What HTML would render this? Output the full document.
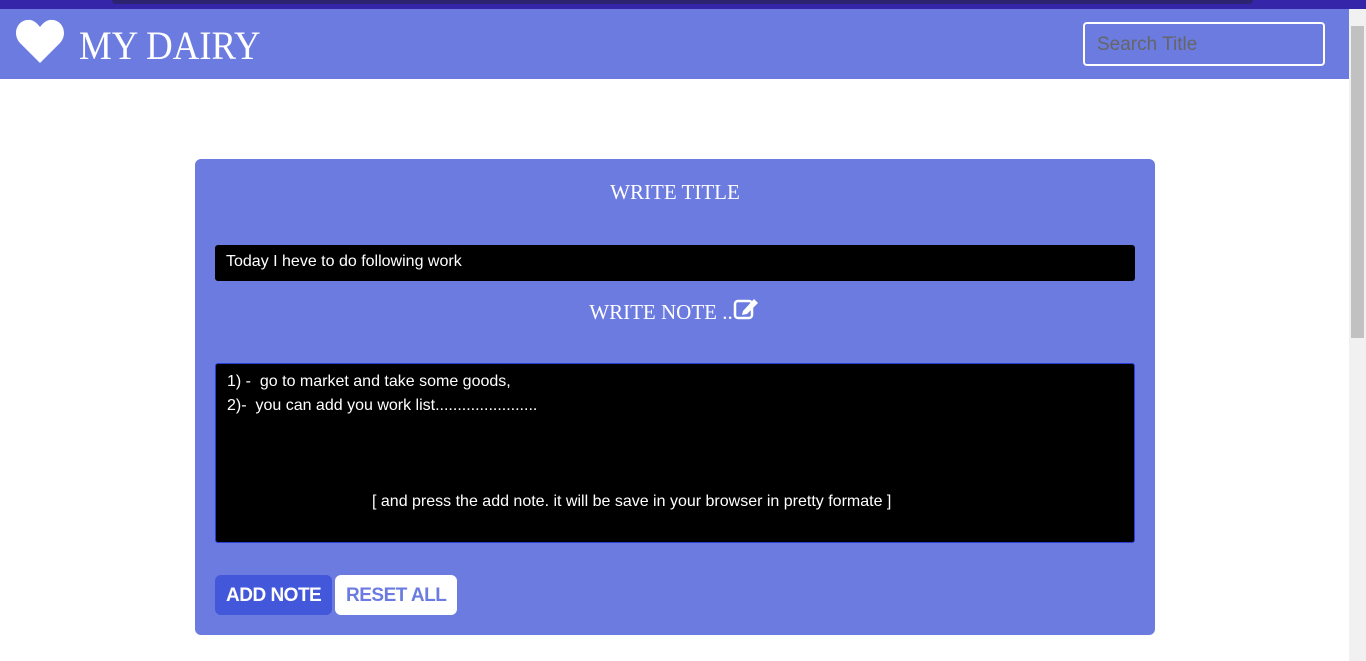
<!DOCTYPE html>
<html><head><meta charset="utf-8"><style>
*{box-sizing:border-box;margin:0;padding:0}
body{width:1366px;height:661px;overflow:hidden;background:#fff;font-family:"Liberation Sans",sans-serif;position:relative}
.top{position:absolute;left:0;top:0;width:1366px;height:9px;background:#3525a8}
.tab{position:absolute;left:112px;top:0;width:1141px;height:4px;background:#2c2470;border-radius:0 0 8px 8px}
.nav{position:absolute;left:0;top:9px;width:1349px;height:70px;background:#6b7be0}
.brand{position:absolute;left:79px;top:13px;color:#fff;font-family:"Liberation Serif",serif;font-size:40px;letter-spacing:0px;transform:scaleX(0.92);transform-origin:left}
.search{position:absolute;left:1083px;top:13px;width:242px;height:44px;border:2px solid #fff;border-radius:4px;color:#666;font-size:19px;padding:10px 12px}
.sb{position:absolute;left:1349px;top:9px;width:17px;height:652px;background:#f1f1f1}
.sbt{position:absolute;left:1351px;top:26px;width:13px;height:312px;background:#c1c1c1}
.card{position:absolute;left:195px;top:159px;width:960px;height:476px;background:#6b7be0;border-radius:6px}
h2{position:absolute;width:100%;text-align:center;color:#fff;font-family:"Liberation Serif",serif;font-weight:normal;font-size:21px}
.inp{position:absolute;left:20px;background:#000;color:#fff;border-radius:3px;font-size:16px;width:920px}
.btn{position:absolute;top:416px;height:40px;border-radius:6px;font-weight:bold;font-size:19px;padding:10px 11px;letter-spacing:-0.5px}
</style></head><body>
<div class="top"><div class="tab"></div></div>
<div class="nav">
<svg style="position:absolute;left:15px;top:10px" width="50" height="44" viewBox="0 0 50 44"><path d="M25 44 L5 24 C-3 15 2 2 12 1 C18 0 22 4 25 8 C28 4 32 0 38 1 C48 2 53 15 45 24 Z" fill="#fff"/></svg>
<div class="brand">MY DAIRY</div>
<div class="search">Search Title</div>
</div>
<div class="sb"></div><div class="sbt"></div>
<div class="card">
<h2 style="top:21px">WRITE TITLE</h2>
<div class="inp" style="top:86px;height:36px;padding:8px 11px">Today I heve to do following work</div>
<h2 style="top:137px">WRITE NOTE ..<svg width="28" height="24" viewBox="0 0 28 24" style="vertical-align:-1px"><rect x="2" y="5" width="17" height="17" rx="3" fill="none" stroke="#fff" stroke-width="2.5"/><path d="M10 15 L21 3 L25 7 L14 18 L9 19 Z" fill="#fff"/></svg></h2>
<div class="inp" style="top:204px;height:180px;padding:6px 11px;line-height:24px;border:1px solid #2a3fd0">1) -&nbsp; go to market and take some goods,<br>2)-&nbsp; you can add you work list.......................<br><br><br><br><span style="padding-left:145px">[ and press the add note. it will be save in your browser in pretty formate ]</span></div>
<div class="btn" style="left:20px;background:#4257d9;color:#fff">ADD NOTE</div>
<div class="btn" style="left:140px;background:#fff;color:#6b7be0">RESET ALL</div>
</div>
</body></html>
